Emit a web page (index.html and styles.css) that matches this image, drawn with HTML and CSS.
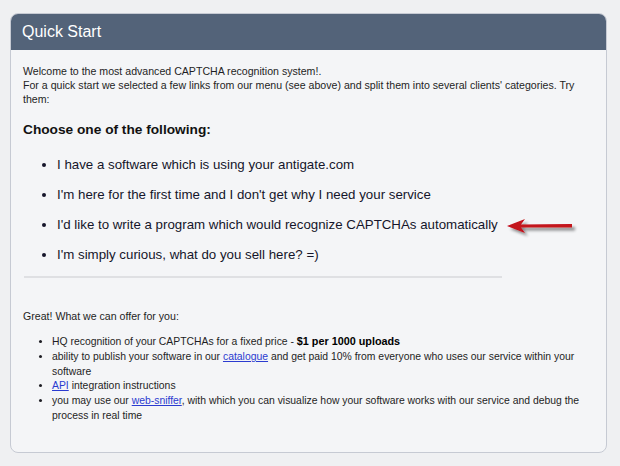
FILE: index.html
```html
<!DOCTYPE html>
<html>
<head>
<meta charset="utf-8">
<link rel="stylesheet" href="styles.css">
</head>
<body>
<div class="panel">
  <div class="panel-header">Quick Start</div>
  <div class="panel-body">
    <p class="intro">Welcome to the most advanced CAPTCHA recognition system!.<br>For a quick start we selected a few links from our menu (see above) and split them into several clients' categories. Try them:</p>
    <h3 class="choose">Choose one of the following:</h3>
    <ul class="choices">
      <li>I have a software which is using your antigate.com</li>
      <li>I'm here for the first time and I don't get why I need your service</li>
      <li>I'd like to write a program which would recognize CAPTCHAs automatically</li>
      <li>I'm simply curious, what do you sell here? =)</li>
    </ul>
    <div class="sep"></div>
    <p class="great">Great! What we can offer for you:</p>
    <ul class="offers">
      <li>HQ recognition of your CAPTCHAs for a fixed price - <b>$1 per 1000 uploads</b></li>
      <li>ability to publish your software in our <a href="#">catalogue</a> and get paid 10% from everyone who uses our service within your software</li>
      <li><a href="#">API</a> integration instructions</li>
      <li>you may use our <a href="#">web-sniffer</a>, with which you can visualize how your software works with our service and debug the process in real time</li>
    </ul>
  </div>
  <svg class="arrow" width="76" height="24" viewBox="0 0 76 24">
    <defs>
      <filter id="sh" x="-20%" y="-50%" width="140%" height="200%">
        <feGaussianBlur in="SourceAlpha" stdDeviation="1.5"/>
        <feOffset dx="3" dy="3" result="b"/>
        <feComponentTransfer><feFuncA type="linear" slope="0.45"/></feComponentTransfer>
        <feMerge><feMergeNode/><feMergeNode in="SourceGraphic"/></feMerge>
      </filter>
    </defs>
    <g filter="url(#sh)">
      <path d="M1 8 L19 1 L15 6.5 L66 6 L66 9.5 L15 9.5 L19 15 Z" fill="#c3121b"/>
    </g>
  </svg>
</div>
</body>
</html>
```
FILE: styles.css
```css
html, body {
  margin: 0;
  padding: 0;
}
body {
  background: #eff0f2;
  padding: 13px 0 0 10px;
  font-family: "Liberation Sans", Arial, sans-serif;
  color: #1e1e24;
}
.panel {
  position: relative;
  width: 595px;
  border: 1px solid #c6cad3;
  border-radius: 8px;
  background: #f4f5f7;
  overflow: hidden;
}
.panel-header {
  height: 36px;
  line-height: 36px;
  background: #536379;
  color: #ffffff;
  font-size: 16px;
  padding-left: 11px;
}
.panel-body {
  padding: 14px 17px 28px 12px;
}
.intro {
  margin: 0;
  font-size: 10.6px;
  line-height: 14px;
}
.choose {
  margin: 15px 0 0 0;
  font-size: 13.7px;
  line-height: 18px;
  font-weight: bold;
  color: #111;
}
.choices {
  margin: 17px 0 0 0;
  padding-left: 34px;
  font-size: 13.3px;
  line-height: 18px;
  color: #15152a;
}
.choices li {
  margin-bottom: 12px;
}
.choices li:last-child {
  margin-bottom: 0;
}
.sep {
  margin: 12px 0 0 1px;
  width: 478px;
  height: 2px;
  background: #dfe0e3;
}
.great {
  margin: 31px 0 0 0;
  font-size: 10.6px;
  line-height: 14px;
}
.offers {
  margin: 11px -8px 0 0;
  padding-left: 29px;
  font-size: 10.4px;
  line-height: 14.8px;
}
.offers b {
  color: #000;
  font-size: 10.8px;
}
.offers a {
  color: #2b3bd0;
  text-decoration: underline;
}
.arrow {
  position: absolute;
  left: 495px;
  top: 204px;
}
```
